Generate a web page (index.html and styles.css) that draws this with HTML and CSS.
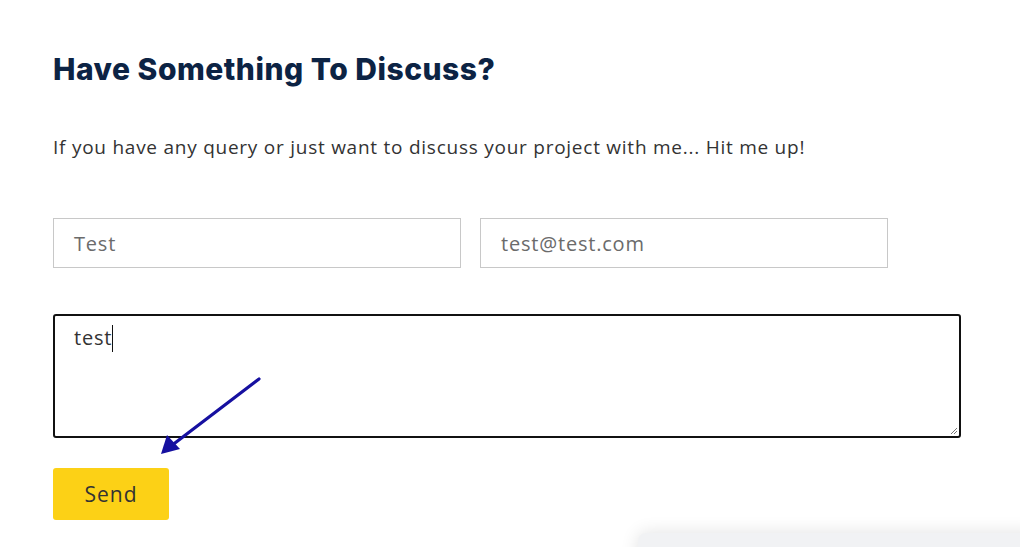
FILE: index.html
```html
<!DOCTYPE html>
<html lang="en">
<head>
<meta charset="utf-8">
<title>Contact</title>
<link rel="stylesheet" href="styles.css">
</head>
<body>
<main class="contact">
  <h2 class="title">Have Something To Discuss?</h2>
  <p class="lead">If you have any query or just want to discuss your project with me... Hit me up!</p>
  <form class="form">
    <div class="row">
      <div class="field">Test</div>
      <div class="field">test@test.com</div>
    </div>
    <div class="message">
      <span class="msg-text">test</span><span class="caret"></span>
      <svg class="grip" width="9" height="9" viewBox="0 0 9 9"><path d="M8 2 L2 8 M8 5 L5 8" stroke="#777" stroke-width="1" fill="none"/></svg>
    </div>
    <button type="button" class="send">Send</button>
  </form>
  <svg class="arrow" width="120" height="90" viewBox="0 0 120 90">
    <line x1="106" y1="8" x2="18" y2="75" stroke="#1610a0" stroke-width="3.2" stroke-linecap="round"/>
    <polygon points="8,83 14,64 27,78" fill="#1610a0"/>
  </svg>
</main>
<div class="corner-card"></div>
</body>
</html>
```
FILE: styles.css
```css
html, body {
  margin: 0;
  padding: 0;
  background: #fff;
  overflow: hidden;
}
body {
  width: 1020px;
  height: 547px;
  position: relative;
  font-family: "Open Sans", "Noto Sans", sans-serif;
}
.contact {
  padding: 48px 0 0 53px;
  position: relative;
}
.title {
  margin: 0;
  font-family: "Inter", sans-serif;
  font-weight: 800;
  font-size: 30px;
  line-height: 42px;
  color: #0c2344;
  letter-spacing: 0.5px;
}
.lead {
  margin: 43px 0 0;
  font-size: 19px;
  line-height: 28px;
  color: #333;
  letter-spacing: 0.75px;
}
.form {
  margin-top: 57px;
}
.row {
  display: flex;
  gap: 19px;
}
.field {
  box-sizing: border-box;
  width: 408px;
  height: 50px;
  border: 1px solid #c8c8c8;
  padding: 0 20px;
  display: flex;
  align-items: center;
  font-size: 20px;
  color: #6b6b6b;
  letter-spacing: 0.8px;
}
.message {
  box-sizing: border-box;
  position: relative;
  margin-top: 46px;
  width: 908px;
  height: 124px;
  border: 2px solid #111;
  border-radius: 3px;
  padding: 7px 19px;
  font-size: 20px;
  line-height: 30px;
  color: #333;
  letter-spacing: 0.8px;
}
.caret {
  display: inline-block;
  width: 1px;
  height: 27px;
  background: #111;
  vertical-align: -7px;
}
.grip {
  position: absolute;
  right: 1px;
  bottom: 1px;
}
.send {
  display: block;
  margin-top: 30px;
  width: 116px;
  height: 52px;
  border: none;
  border-radius: 3px;
  background: #fcd116;
  color: #333;
  font-family: "Open Sans", sans-serif;
  font-size: 21px;
  letter-spacing: 1px;
  padding: 0;
}
.arrow {
  position: absolute;
  left: 153px;
  top: 371px;
}
.corner-card {
  position: absolute;
  left: 638px;
  top: 533px;
  width: 400px;
  height: 40px;
  background: #f1f2f4;
  border-radius: 8px 0 0 0;
  box-shadow: 0 0 18px rgba(0, 0, 0, 0.12);
}
```
